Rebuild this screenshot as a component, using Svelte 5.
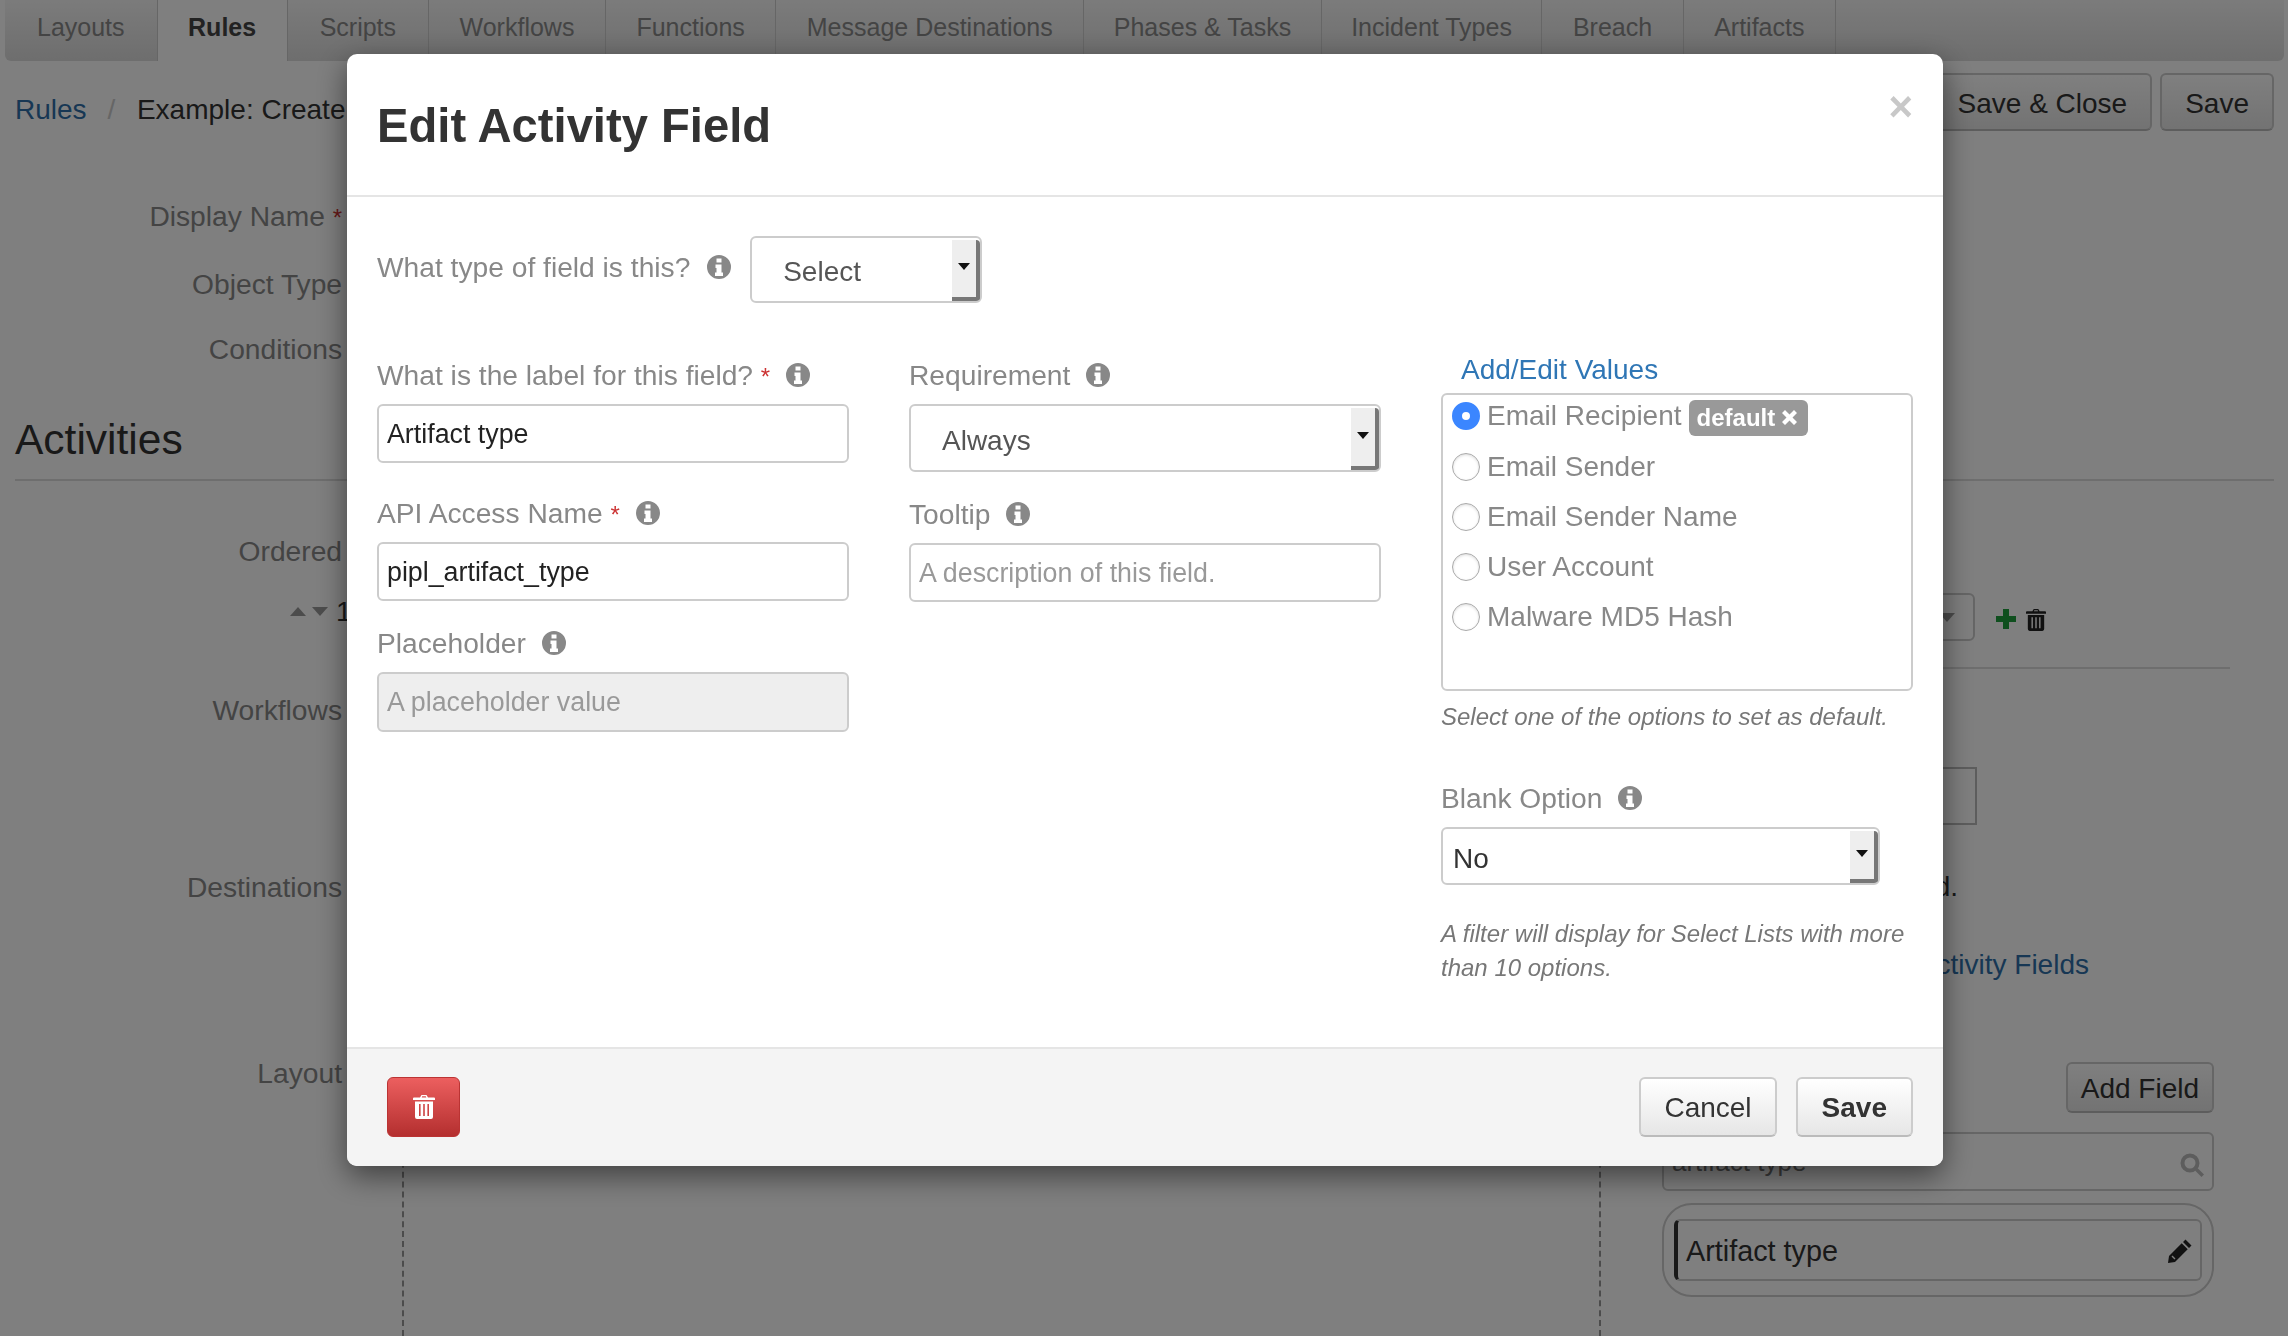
<script lang="ts">
  const TABS = ['Layouts', 'Rules', 'Scripts', 'Workflows', 'Functions', 'Message Destinations', 'Phases & Tasks', 'Incident Types', 'Breach', 'Artifacts'];
  const VALUES = ['Email Recipient', 'Email Sender', 'Email Sender Name', 'User Account', 'Malware MD5 Hash'];
</script>

{#snippet info()}
  <svg class="info" viewBox="0 0 24 24" aria-hidden="true">
    <path fill-rule="evenodd" d="M12 0a12 12 0 1 0 0 24a12 12 0 0 0 0-24zM9.5 3.5h5v4h-5zM8.5 9.5h6v8h1.5v3.5H8v-3.5h1.5v-4.5h-1z" />
  </svg>
{/snippet}

{#snippet trash(cls)}
  <svg class={cls} viewBox="0 0 22 24" aria-hidden="true">
    <path fill-rule="evenodd" d="M7 2.5L8.5 0h5L15 2.5h6a1 1 0 0 1 1 1V5H0V3.500a1 1 0 0 1 1-1zM9.200 1.300L8.700 2.500h4.600l-.5-1.200zM2 6.500h18V22a2 2 0 0 1-2 2H4a2 2 0 0 1-2-2zM6 9v12h1.600V9zM10.200 9v12h1.600V9zM14.400 9v12H16V9z" />
  </svg>
{/snippet}

{#snippet select(value, cls)}
  <div class="select {cls}">
    <span>{value}</span>
    <div class="select-arrow"><i></i></div>
  </div>
{/snippet}

<div class="page">
  <nav class="tabs">
    {#each TABS as tab (tab)}
      <span class="tab" class:tab--active={tab === 'Rules'}>{tab}</span>
    {/each}
  </nav>

  <div class="toolbar">
    <div class="crumbs">
      <span class="link">Rules</span>
      <span class="crumb-sep">/</span>
      <span>Example: Create Artifact</span>
    </div>
    <div class="toolbar-actions">
      <span class="btn btn--page">Save &amp; Close</span>
      <span class="btn btn--page">Save</span>
    </div>
  </div>

  <div class="form-row r-display"><span class="form-label">Display Name <b>*</b></span></div>
  <div class="form-row r-object"><span class="form-label">Object Type</span></div>
  <div class="form-row r-conditions"><span class="form-label">Conditions</span></div>

  <h2 class="section-title">Activities</h2>

  <div class="form-row r-ordered"><span class="form-label">Ordered</span></div>
  <div class="form-row r-step">
    <span class="form-label">
      <i class="tri tri--up"></i><i class="tri tri--down"></i><em>1</em>
    </span>
    <div class="step-tools">
      <div class="stub-select"><i class="tri tri--down"></i></div>
      <svg class="plus" viewBox="0 0 20 20" aria-hidden="true"><path d="M7 0h6v7h7v6h-7v7H7v-7H0V7h7z" /></svg>
      {@render trash('tool-trash')}
    </div>
  </div>
  <div class="form-row r-rule"><span></span><div class="rule"></div></div>
  <div class="form-row r-workflows">
    <span class="form-label">Workflows</span>
    <div class="stub-box"></div>
  </div>
  <div class="form-row r-destinations">
    <span class="form-label">Destinations</span>
    <div class="stub-text">No message destinations have been selected.</div>
  </div>
  <div class="form-row r-fields">
    <span></span>
    <div class="stub-link link">Edit Activity Fields</div>
  </div>
  <div class="form-row r-layout">
    <span class="form-label">Layout</span>
    <div class="layout">
      <div class="drop-zone"></div>
      <div class="field-panel">
        <span class="btn btn--page btn--add">Add Field</span>
        <div class="field-search">
          <span>artifact type</span>
          <svg class="search-icon" viewBox="0 0 24 24" aria-hidden="true">
            <circle cx="10" cy="10" r="7.500" fill="none" stroke-width="4" />
            <path d="M15 17.500l2.500-2.500L24 21.500 21.500 24z" stroke="none" />
          </svg>
        </div>
        <div class="field-list">
          <div class="field-item">
            <span>Artifact type</span>
            <svg class="pencil" viewBox="0 0 24 24" aria-hidden="true">
              <path d="M17.500 0.500l6 6-2.500 2.500-6-6zM13.700 4.300l6 6L7 23l-7 1 1-7zM3.500 17.500l3 3 1-1-3-3z" fill-rule="evenodd" />
            </svg>
          </div>
        </div>
      </div>
    </div>
  </div>
</div>

<div class="backdrop"></div>

<div class="modal" role="dialog" aria-label="Edit Activity Field">
  <header class="modal-header">
    <h3>Edit Activity Field</h3>
    <span class="close">×</span>
  </header>

  <div class="modal-body">
    <div class="type-row">
      <span class="label">What type of field is this? {@render info()}</span>
      {@render select('Select', 'select--type')}
    </div>

    <div class="columns">
      <div class="col">
        <div class="field field--spaced">
          <span class="label">What is the label for this field? <b>*</b> {@render info()}</span>
          <div class="input">Artifact type</div>
        </div>
        <div class="field">
          <span class="label">API Access Name <b>*</b> {@render info()}</span>
          <div class="input">pipl_artifact_type</div>
        </div>
        <div class="field">
          <span class="label">Placeholder {@render info()}</span>
          <div class="input input--disabled">A placeholder value</div>
        </div>
      </div>

      <div class="col">
        <div class="field">
          <span class="label">Requirement {@render info()}</span>
          {@render select('Always', 'select--req')}
        </div>
        <div class="field">
          <span class="label">Tooltip {@render info()}</span>
          <div class="input input--placeholder">A description of this field.</div>
        </div>
      </div>

      <div class="col col--values">
        <span class="add-values">Add/Edit Values</span>
        <div class="values">
          {#each VALUES as v, i (v)}
            <div class="value">
              <span class="radio" class:radio--on={i === 0}></span>
              <span>{v}</span>
              {#if i === 0}
                <span class="badge">default
                  <svg viewBox="0 0 16 16" aria-hidden="true"><path d="M3.200 0L8 4.800 12.800 0 16 3.200 11.200 8 16 12.800 12.800 16 8 11.200 3.200 16 0 12.800 4.800 8 0 3.200z" /></svg>
                </span>
              {/if}
            </div>
          {/each}
        </div>
        <p class="help">Select one of the options to set as default.</p>
        <span class="label label--blank">Blank Option {@render info()}</span>
        {@render select('No', 'select--blank')}
        <p class="help help--filter">A filter will display for Select Lists with more than 10 options.</p>
      </div>
    </div>
  </div>

  <footer class="modal-footer">
    <button class="btn-delete" type="button" aria-label="Delete">{@render trash('delete-trash')}</button>
    <div class="footer-actions">
      <button class="btn-default" type="button">Cancel</button>
      <button class="btn-default btn-default--save" type="button">Save</button>
    </div>
  </footer>
</div>

<style>
  :global(body) {
    margin: 0;
    background: #fff;
    font-family: "Liberation Sans", Arial, sans-serif;
    color: #333;
  }

  /* ── Page behind the dialog ── */
  .page {
    height: 1336px;
    overflow: hidden;
    font-size: 28px;
    line-height: 40px;
  }

  .tabs {
    display: flex;
    height: 61px;
    margin: 0 4px 0 5px;
    background: linear-gradient(#f7f7f7, #dcdcdc);
    border-radius: 0 0 6px 6px;
  }

  .tab {
    box-sizing: border-box;
    padding: 7px 30.500px 0;
    border-right: 1px solid #ccc;
    font-size: 25px;
    color: #888;
  }

  .tab--active {
    background: #fff;
    color: #444;
    font-weight: 700;
  }

  .tab:first-child {
    padding: 7px 32px 0;
  }

  .tab:nth-child(3) {
    padding: 7px 32px 0;
  }

  .tab:nth-child(7),
  .tab:nth-child(8) {
    padding: 7px 29.500px 0;
  }

  .toolbar {
    display: flex;
    justify-content: space-between;
    height: 58px;
    margin-top: 12px;
    padding: 0 14px 0 15px;
  }

  .crumbs {
    padding-top: 17px;
    white-space: nowrap;
  }

  .crumb-sep {
    margin: 0 14px 0 13px;
    color: #ccc;
  }

  .link {
    color: #2f6fa8;
  }

  .toolbar-actions {
    display: flex;
    gap: 8px;
  }

  .btn {
    box-sizing: border-box;
    padding: 0 23px;
    border: 2px solid #ccc;
    border-bottom-color: #bbb;
    border-radius: 6px;
    background: linear-gradient(#fff, #e6e6e6);
    line-height: 58px;
    white-space: nowrap;
  }

  .form-row {
    display: grid;
    grid-template-columns: 342px 1fr;
  }

  .form-label {
    color: #888;
    text-align: right;
    white-space: nowrap;
    font-size: 28.200px;
  }

  .form-label b {
    color: #c33;
    font-size: 24px;
    font-weight: 400;
    line-height: 1;
  }

  .r-display {
    margin-top: 65px;
  }

  .r-object {
    margin-top: 28px;
  }

  .r-conditions {
    margin-top: 25px;
  }

  .section-title {
    height: 55px;
    margin: 47px 14px 0 15px;
    padding-bottom: 8px;
    border-bottom: 2px solid #ddd;
    font-size: 42.500px;
    font-weight: 400;
    line-height: 48px;
  }

  .r-ordered {
    margin-top: 50px;
  }

  .r-step {
    margin-top: 20px;
    height: 52px;
  }

  .r-step .form-label {
    display: flex;
    align-items: center;
    justify-content: flex-end;
    height: 40px;
    gap: 6px;
    color: #333;
  }

  .r-step em {
    width: 14px;
    margin: 0 -8px 0 2px;
    font-style: normal;
  }

  .tri {
    width: 0;
    height: 0;
    border-left: 8px solid transparent;
    border-right: 8px solid transparent;
  }

  .tri--up {
    border-bottom: 9px solid #999;
  }

  .tri--down {
    border-top: 9px solid #999;
  }

  .step-tools {
    display: flex;
    align-items: center;
    height: 52px;
    padding-left: 1558px;
  }

  .stub-select {
    box-sizing: border-box;
    display: flex;
    align-items: center;
    justify-content: flex-end;
    width: 75px;
    height: 48px;
    padding-right: 18px;
    border: 2px solid #ccc;
    border-radius: 6px;
  }

  .plus {
    width: 20px;
    height: 20px;
    margin: 4px 0 0 21px;
    fill: #1f9e3c;
  }

  .tool-trash {
    width: 20px;
    height: 22px;
    margin: 6px 0 0 10px;
    fill: #222;
  }

  .r-rule {
    height: 2px;
    margin-top: 24px;
  }

  .rule {
    margin-left: 1500px;
    margin-right: 58px;
    border-top: 2px solid #ddd;
  }

  .r-workflows {
    height: 134px;
    margin-top: 21px;
  }

  .stub-box {
    box-sizing: border-box;
    width: 300px;
    height: 58px;
    margin: 77px 0 0 1335px;
    border: 2px solid #bbb;
  }

  .r-destinations {
    margin-top: 43px;
  }

  .stub-text {
    width: 1616px;
    text-align: right;
    white-space: nowrap;
  }

  .r-fields {
    margin-top: 38px;
  }

  .stub-link {
    width: 1747px;
    text-align: right;
    white-space: nowrap;
  }

  .r-layout {
    margin-top: 68px;
  }

  .layout {
    display: flex;
    padding-left: 60px;
  }

  .drop-zone {
    box-sizing: border-box;
    width: 1199px;
    height: 283px;
    border-left: 2px dashed #999;
    border-right: 2px dashed #999;
  }

  .field-panel {
    display: flex;
    flex-direction: column;
    width: 552px;
    margin-left: 61px;
    padding-top: 9px;
  }

  .btn--add {
    align-self: flex-end;
    height: 51px;
    padding: 0 13px;
    line-height: 50px;
  }

  .field-search {
    box-sizing: border-box;
    display: flex;
    align-items: center;
    justify-content: space-between;
    height: 59px;
    margin-top: 19px;
    padding: 0 8px;
    border: 2px solid #ccc;
    border-radius: 6px;
    font-size: 26px;
    color: #777;
  }

  .search-icon {
    width: 24px;
    height: 24px;
    margin: 6px 0 0 0;
    fill: #bbb;
    stroke: #bbb;
  }

  .field-list {
    box-sizing: border-box;
    height: 94px;
    margin-top: 12px;
    padding: 14px 10px;
    border: 2px solid #ccc;
    border-radius: 30px;
  }

  .field-item {
    box-sizing: border-box;
    display: flex;
    align-items: center;
    justify-content: space-between;
    height: 62px;
    padding: 2px 8px 0 8px;
    border: 2px solid #ccc;
    border-left: 4px solid #333;
    border-radius: 6px;
    font-size: 28.800px;
  }

  .pencil {
    width: 24px;
    height: 24px;
    fill: #222;
  }

  .backdrop {
    position: fixed;
    inset: 0;
    background: rgba(0, 0, 0, 0.5);
  }

  /* ── Dialog ── */
  .modal {
    position: fixed;
    left: 347px;
    top: 54px;
    display: flex;
    flex-direction: column;
    width: 1596px;
    height: 1112px;
    overflow: hidden;
    border-radius: 10px;
    background: #fff;
    box-shadow: 0 10px 30px rgba(0, 0, 0, 0.5);
    font-size: 28px;
    line-height: 40px;
  }

  .modal-header {
    box-sizing: border-box;
    display: flex;
    align-items: flex-start;
    justify-content: space-between;
    flex: none;
    height: 143px;
    padding: 42px 30px 0;
    border-bottom: 2px solid #e5e5e5;
  }

  h3 {
    margin: 0;
    font-size: 47.200px;
    font-weight: 700;
    line-height: 60px;
    color: #333;
  }

  .close {
    margin-top: -14px;
    font-size: 42px;
    font-weight: 700;
    line-height: 50px;
    color: #c8c8c8;
  }

  .modal-body {
    flex: 1;
    padding: 39px 30px 0;
  }

  .type-row {
    display: flex;
    align-items: center;
    gap: 19px;
  }

  .label {
    display: block;
    height: 40px;
    color: #888;
    font-size: 28.200px;
    white-space: nowrap;
  }

  .type-row .label {
    margin-top: -6px;
  }

  .type-row .info {
    margin-left: 9px;
  }

  .label b {
    color: #c33;
    font-size: 24px;
    font-weight: 400;
    line-height: 1;
  }

  .info {
    width: 24px;
    height: 24px;
    margin-left: 8px;
    fill: #888;
    vertical-align: -2px;
  }

  .select {
    box-sizing: border-box;
    display: flex;
    align-items: stretch;
    justify-content: space-between;
    border: 2px solid #ccc;
    border-radius: 6px;
    color: #555;
  }

  .select span {
    align-self: center;
    margin-top: 5px;
  }

  .select-arrow {
    box-sizing: border-box;
    display: flex;
    align-items: center;
    justify-content: center;
    width: 28px;
    margin-top: 2px;
    background: #eee;
    border-right: 4px solid #777;
    border-bottom: 4px solid #777;
    border-radius: 0 4px 4px 0;
  }

  .select-arrow i {
    width: 0;
    height: 0;
    margin-top: -4px;
    border-left: 6px solid transparent;
    border-right: 6px solid transparent;
    border-top: 7px solid #111;
  }

  .select--type {
    width: 232px;
    height: 67px;
    padding-left: 31px;
  }

  .select--req {
    height: 68px;
    padding-left: 31px;
  }

  .select--blank {
    width: 439px;
    height: 58px;
    padding-left: 10px;
    color: #333;
  }

  .columns {
    display: grid;
    grid-template-columns: 472px 472px 472px;
    column-gap: 60px;
    margin-top: 52px;
  }

  .field + .field {
    margin-top: 22px;
  }

  .field--spaced + .field {
    margin-top: 30px;
  }

  .field .label {
    margin-bottom: 9px;
  }

  .input {
    box-sizing: border-box;
    height: 59px;
    padding: 0 8px;
    border: 2px solid #ccc;
    border-radius: 6px;
    font-size: 26.800px;
    line-height: 57px;
    color: #222;
  }

  .input--placeholder {
    color: #999;
  }

  .input--disabled {
    height: 60px;
    background: #eee;
    color: #999;
  }

  .col--values {
    margin-top: -5px;
  }

  .add-values {
    display: block;
    margin: 0 0 3px 20px;
    color: #2f76b5;
  }

  .values {
    box-sizing: border-box;
    display: flex;
    flex-direction: column;
    gap: 10px;
    height: 298px;
    padding: 1px 9px 0;
    border: 2px solid #ccc;
    border-radius: 6px;
    color: #888;
  }

  .value {
    display: flex;
    align-items: center;
    height: 40px;
    white-space: nowrap;
  }

  .value:first-child {
    margin-bottom: 1px;
  }

  .radio {
    box-sizing: border-box;
    flex: none;
    width: 28px;
    height: 28px;
    margin-right: 7px;
    border: 1px solid #aaa;
    border-radius: 50%;
    box-shadow: inset 0 1px 3px rgba(0, 0, 0, 0.15);
  }

  .radio--on {
    border: 10px solid #3b86ff;
    background: #fff;
    box-shadow: none;
  }

  .badge {
    box-sizing: border-box;
    display: flex;
    align-items: center;
    gap: 7px;
    width: 119px;
    height: 36px;
    margin: 3px 0 0 7px;
    padding-left: 8px;
    border-radius: 6px;
    background: #999;
    color: #fff;
    font-size: 24px;
    font-weight: 700;
  }

  .badge svg {
    width: 15px;
    height: 15px;
    fill: #fff;
  }

  .help {
    margin: 9px 0 0;
    font-size: 24px;
    font-style: italic;
    line-height: 34px;
    color: #777;
  }

  .label--blank {
    margin: 44px 0 9px;
  }

  .help--filter {
    margin-top: 32px;
  }

  .modal-footer {
    box-sizing: border-box;
    display: flex;
    align-items: flex-start;
    justify-content: space-between;
    flex: none;
    height: 119px;
    padding: 28px 30px 0 40px;
    background: #f4f4f4;
    border-top: 2px solid #e5e5e5;
  }

  .btn-delete {
    display: flex;
    align-items: center;
    justify-content: center;
    width: 73px;
    height: 60px;
    padding: 0;
    border: 1px solid #b33;
    border-radius: 6px;
    background: linear-gradient(#ec5f5f, #b42f2f);
  }

  .delete-trash {
    width: 22px;
    height: 24px;
    fill: #fff;
  }

  .footer-actions {
    display: flex;
    gap: 19px;
  }

  .btn-default {
    height: 60px;
    padding: 2px 23px 0;
    border: 2px solid #ccc;
    border-bottom-color: #bbb;
    border-radius: 6px;
    background: linear-gradient(#fff, #e6e6e6);
    font-family: inherit;
    font-size: 28px;
    color: #333;
  }

  .btn-default--save {
    padding: 2px 24px 0;
    font-weight: 700;
  }
</style>
